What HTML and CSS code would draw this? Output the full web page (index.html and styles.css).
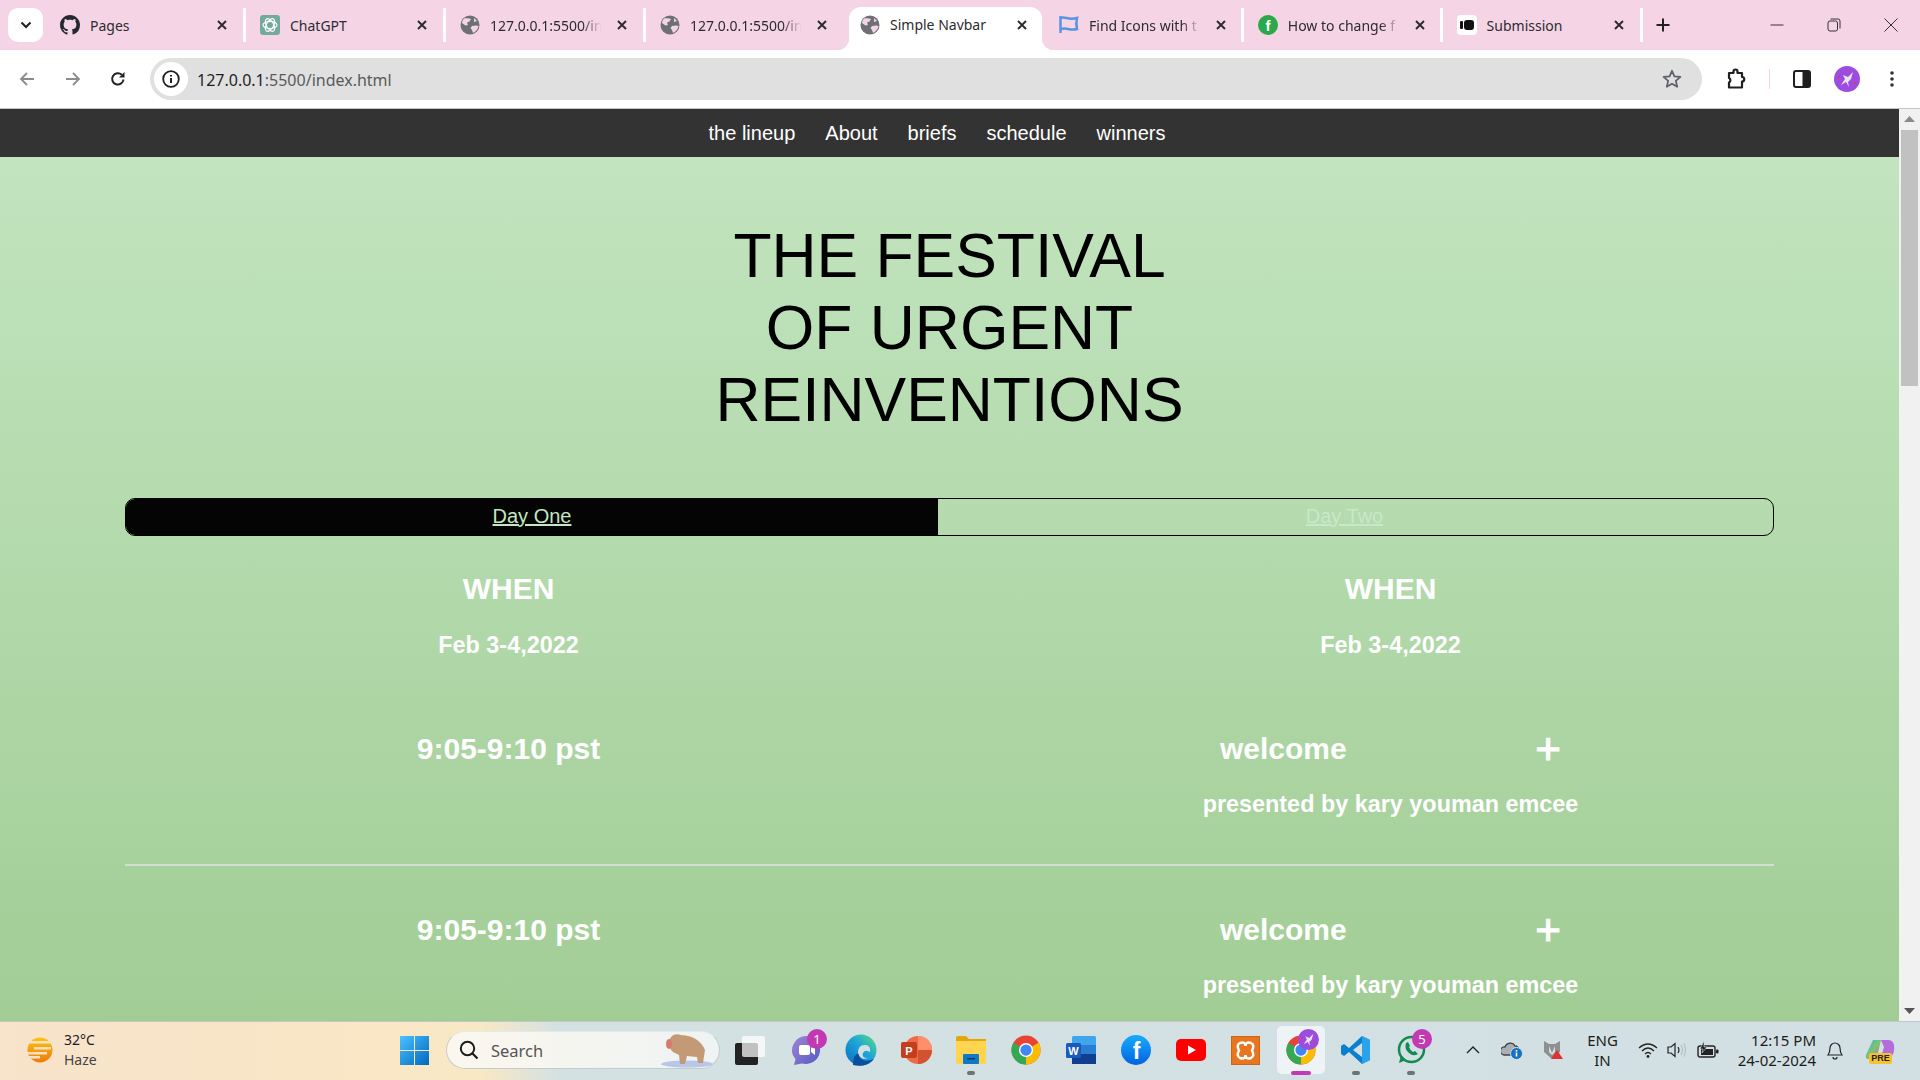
FILE: index.html
```html
<!DOCTYPE html>
<html lang="en">
<head>
<meta charset="utf-8">
<title>Simple Navbar</title>
<link rel="stylesheet" href="styles.css">
</head>
<body>
<svg class="defs" width="0" height="0" aria-hidden="true">
  <symbol id="globe" viewBox="0 0 20 20"><circle cx="10" cy="10" r="9.5" fill="#6d7075"/><path d="M4 3.500 C6 3 9 3 11 4 L9.500 6.500 L7 7.500 L8 10 L5.500 10.500 L2 8 C2 6.500 3 4.500 4 3.500Z M12 11 L16 10.500 L18.500 11 C18 14 16 16.500 13 18 L12 15 L10.500 13Z M14 3 L17 6 L14 7Z" fill="#f5d5e5"/></symbol>
  <symbol id="chrome" viewBox="0 0 32 32"><circle cx="16" cy="16" r="15.500" fill="#ea4335"/><path d="M16 16 L29.400 8.200 A15.500 15.500 0 0 1 16 31.500Z" fill="#fbbc05"/><path d="M16 16 L16 31.500 A15.500 15.500 0 0 1 2.600 8.200Z" fill="#34a853"/><circle cx="16" cy="16" r="7.500" fill="#fff"/><circle cx="16" cy="16" r="6" fill="#4285f4"/></symbol>
  <symbol id="close" viewBox="0 0 12 12"><path d="M2 2 L10 10 M10 2 L2 10" stroke="#2a2a30" stroke-width="1.900" fill="none"/></symbol>
  <symbol id="avatar" viewBox="0 0 26 26"><circle cx="13" cy="13" r="13" fill="#9c4de0"/><path d="M7 19 L11 13 L9 9 L14 11 L19 6 L17 13 L14 16 L15 21 L12 16Z" fill="#e8e4ea"/><circle cx="5" cy="11" r="1" fill="#e33"/><circle cx="21" cy="17" r="1" fill="#e33"/></symbol>
</svg>

<header class="tabstrip">
  <div class="tab-search"><svg width="12" height="8" viewBox="0 0 12 8"><path d="M1.500 1.500 L6 6 L10.500 1.500" stroke="#1f1f1f" stroke-width="2" fill="none"/></svg></div>
  <div class="tab">
    <svg class="fav" width="20" height="20" viewBox="0 0 16 16"><path fill="#24292f" d="M8 0C3.580 0 0 3.580 0 8c0 3.540 2.290 6.530 5.470 7.590.4.070.55-.17.55-.38 0-.19-.01-.82-.01-1.490-2.010.37-2.530-.49-2.690-.94-.09-.23-.48-.94-.82-1.130-.28-.15-.68-.52-.01-.53.630-.01 1.080.58 1.230.82.720 1.210 1.870.87 2.330.66.070-.52.280-.87.510-1.070-1.780-.2-3.640-.89-3.640-3.950 0-.87.310-1.590.82-2.150-.08-.2-.36-1.020.08-2.120 0 0 .67-.21 2.200.82.640-.18 1.320-.27 2-.27s1.360.09 2 .27c1.530-1.040 2.200-.82 2.200-.82.440 1.100.16 1.920.08 2.120.51.560.82 1.270.82 2.150 0 3.070-1.870 3.750-3.650 3.950.29.250.54.730.54 1.480 0 1.070-.01 1.930-.01 2.200 0 .21.150.46.550.38A8.010 8.010 0 0 0 16 8c0-4.420-3.580-8-8-8z"/></svg>
    <span class="tab-title">Pages</span><svg class="tab-x" width="12" height="12"><use href="#close"/></svg>
  </div>
  <div class="tab">
    <svg class="fav" width="20" height="20" viewBox="0 0 20 20"><rect width="20" height="20" rx="3" fill="#74aa9c"/><g fill="none" stroke="#fff" stroke-width="1.100"><ellipse cx="10" cy="10" rx="7" ry="3.600"/><ellipse cx="10" cy="10" rx="7" ry="3.600" transform="rotate(60 10 10)"/><ellipse cx="10" cy="10" rx="7" ry="3.600" transform="rotate(120 10 10)"/></g></svg>
    <span class="tab-title">ChatGPT</span><svg class="tab-x" width="12" height="12"><use href="#close"/></svg>
  </div>
  <div class="tab">
    <svg class="fav" width="20" height="20"><use href="#globe"/></svg>
    <span class="tab-title fade">127.0.0.1:5500/in</span><svg class="tab-x" width="12" height="12"><use href="#close"/></svg>
  </div>
  <div class="tab tab-before-active">
    <svg class="fav" width="20" height="20"><use href="#globe"/></svg>
    <span class="tab-title fade">127.0.0.1:5500/in</span><svg class="tab-x" width="12" height="12"><use href="#close"/></svg>
  </div>
  <div class="tab tab-active">
    <svg class="fav" width="20" height="20"><use href="#globe"/></svg>
    <span class="tab-title">Simple Navbar</span><svg class="tab-x" width="12" height="12"><use href="#close"/></svg>
  </div>
  <div class="tab tab-narrow">
    <svg class="fav" width="20" height="20" viewBox="0 0 20 20"><path d="M1.500 1 L1.500 18 M1.500 3 C6 1 9 5.500 18 3 C17 7 17 10 18 14 C10 16 7 11.500 1.500 14.500" fill="none" stroke="#5a93e0" stroke-width="2.500"/></svg>
    <span class="tab-title fade">Find Icons with t</span><svg class="tab-x" width="12" height="12"><use href="#close"/></svg>
  </div>
  <div class="tab tab-narrow">
    <svg class="fav" width="20" height="20" viewBox="0 0 20 20"><circle cx="10" cy="10" r="10" fill="#2aa84a"/><text x="10" y="15.500" class="fav-letter">f</text></svg>
    <span class="tab-title fade">How to change f</span><svg class="tab-x" width="12" height="12"><use href="#close"/></svg>
  </div>
  <div class="tab">
    <svg class="fav" width="20" height="20" viewBox="0 0 20 20"><rect width="20" height="20" rx="4" fill="#fff"/><rect x="3" y="6" width="3" height="8" rx="1" fill="#111"/><rect x="7" y="5" width="10" height="10" rx="3" fill="#111"/></svg>
    <span class="tab-title">Submission</span><svg class="tab-x" width="12" height="12"><use href="#close"/></svg>
  </div>
  <svg class="new-tab" width="14" height="14" viewBox="0 0 14 14"><path d="M7 0.500 V13.500 M0.500 7 H13.500" stroke="#222" stroke-width="2"/></svg>
  <div class="window-controls">
    <svg width="14" height="14" viewBox="0 0 14 14"><path d="M0.500 7 H13.500" stroke="#333" stroke-width="1"/></svg>
    <svg width="14" height="14" viewBox="0 0 14 14"><rect x="1" y="3" width="9.500" height="10" rx="2" fill="none" stroke="#333"/><path d="M3.500 1 H11 Q13 1 13 3 V10.500" fill="none" stroke="#333"/></svg>
    <svg width="14" height="14" viewBox="0 0 14 14"><path d="M0.500 0.500 L13.500 13.500 M13.500 0.500 L0.500 13.500" stroke="#333" stroke-width="1"/></svg>
  </div>
</header>

<div class="toolbar">
  <div class="nav-buttons">
    <svg width="16" height="16" viewBox="0 0 16 16"><path d="M15 8 H2 M8 2 L2 8 L8 14" stroke="#8c8c8c" stroke-width="1.800" fill="none"/></svg>
    <svg width="16" height="16" viewBox="0 0 16 16"><path d="M1 8 H14 M8 2 L14 8 L8 14" stroke="#8c8c8c" stroke-width="1.800" fill="none"/></svg>
    <svg width="16" height="16" viewBox="0 0 16 16"><path d="M13.500 8.500 A5.700 5.700 0 1 1 11.800 3.800" stroke="#222" stroke-width="2" fill="none"/><path d="M14.500 1 V6.500 H9Z" fill="#222"/></svg>
  </div>
  <div class="omnibox">
    <div class="site-info"><svg width="18" height="18" viewBox="0 0 18 18"><circle cx="9" cy="9" r="7.800" fill="none" stroke="#1f1f1f" stroke-width="1.800"/><path d="M9 8 V13 M9 5 V6.600" stroke="#1f1f1f" stroke-width="2"/></svg></div>
    <div class="url"><span class="url-host">127.0.0.1</span>:5500/index.html</div>
    <svg class="star" width="20" height="20" viewBox="0 0 20 20"><path d="M10 1.800 L12.400 7.400 L18.400 7.900 L13.800 11.900 L15.200 17.800 L10 14.700 L4.800 17.800 L6.200 11.900 L1.600 7.900 L7.600 7.400Z" fill="none" stroke="#5f6368" stroke-width="1.800" stroke-linejoin="round"/></svg>
  </div>
  <div class="actions">
    <div class="action action-wide"><svg width="20" height="22" viewBox="0 0 20 22"><path d="M3 5 H7.500 V3.500 A2 2 0 0 1 11.500 3.500 V5 H16 V9 A2 2 0 0 1 16 13.500 V19.500 H3 V14.500 A2.500 2.500 0 0 0 3 10Z" fill="none" stroke="#1f1f1f" stroke-width="2.200" stroke-linejoin="round"/></svg></div>
    <div class="action action-divider"><span class="divider"></span></div>
    <div class="action action-wide"><svg width="18" height="18" viewBox="0 0 18 18"><rect x="1" y="1" width="16" height="16" rx="2" fill="#fff" stroke="#1f1f1f" stroke-width="2"/><rect x="9.500" y="1" width="7.500" height="16" fill="#1f1f1f"/></svg></div>
    <div class="action action-wider"><svg width="26" height="26"><use href="#avatar"/></svg></div>
    <div class="action action-wider"><svg width="4" height="16" viewBox="0 0 4 16"><circle cx="2" cy="2" r="1.800" fill="#333"/><circle cx="2" cy="8" r="1.800" fill="#333"/><circle cx="2" cy="14" r="1.800" fill="#333"/></svg></div>
  </div>
</div>

<div class="viewport">
  <div class="page">
    <nav class="site-nav">
      <a>the lineup</a><a>About</a><a>briefs</a><a>schedule</a><a>winners</a>
    </nav>
    <main class="content">
      <h1 class="festival-title">THE FESTIVAL<br>OF URGENT<br>REINVENTIONS</h1>
      <div class="day-tabs">
        <a class="day-tab day-on">Day One</a>
        <a class="day-tab day-off">Day Two</a>
      </div>
      <div class="columns when-row">
        <div class="cell"><h2 class="when">WHEN</h2><p class="date">Feb 3-4,2022</p></div>
        <div class="cell"><h2 class="when">WHEN</h2><p class="date">Feb 3-4,2022</p></div>
      </div>
      <section class="columns session session-first">
        <div class="cell"><h3 class="slot">9:05-9:10 pst</h3></div>
        <div class="cell">
          <div class="session-head"><h3 class="slot">welcome</h3><span class="plus">+</span></div>
          <p class="presenter">presented by kary youman emcee</p>
        </div>
      </section>
      <section class="columns session">
        <div class="cell"><h3 class="slot">9:05-9:10 pst</h3></div>
        <div class="cell">
          <div class="session-head"><h3 class="slot">welcome</h3><span class="plus">+</span></div>
          <p class="presenter">presented by kary youman emcee</p>
        </div>
      </section>
    </main>
  </div>
  <div class="scrollbar">
    <svg width="11" height="6" viewBox="0 0 11 6"><path d="M5.500 0 L11 6 H0Z" fill="#8a8a8a"/></svg>
    <div class="scroll-track"><div class="scroll-thumb"></div></div>
    <svg width="11" height="6" viewBox="0 0 11 6"><path d="M0 0 H11 L5.500 6Z" fill="#555"/></svg>
  </div>
</div>

<footer class="taskbar">
  <div class="weather">
    <svg width="28" height="26" viewBox="0 0 28 26"><defs><linearGradient id="sun" x1="0" y1="0" x2="0" y2="1"><stop offset="0" stop-color="#fdc30f"/><stop offset="1" stop-color="#f0780f"/></linearGradient></defs><circle cx="15" cy="13" r="12.500" fill="url(#sun)"/><g fill="#f5e3c4"><rect x="4" y="4" width="24" height="2.500"/><rect x="9" y="10" width="17" height="2.500"/><rect x="2" y="15" width="20" height="2.500"/><rect x="0" y="19" width="15" height="2.500"/></g></svg>
    <div class="weather-text"><span class="temp">32°C</span><span class="haze">Haze</span></div>
  </div>
  <svg class="start" width="29" height="29" viewBox="0 0 29 29"><defs><linearGradient id="win" x1="0" y1="0" x2="1" y2="1"><stop offset="0" stop-color="#4cc2ff"/><stop offset="1" stop-color="#0067c0"/></linearGradient></defs><path fill="url(#win)" d="M0 0 H14 V14 H0Z M15 0 H29 V14 H15Z M0 15 H14 V29 H0Z M15 15 H29 V29 H15Z"/></svg>
  <div class="search">
    <svg width="20" height="20" viewBox="0 0 20 20"><circle cx="8.500" cy="8.500" r="6.700" fill="none" stroke="#1c1c1c" stroke-width="2"/><path d="M13.500 13.500 L18.500 18.500" stroke="#1c1c1c" stroke-width="2.200"/></svg>
    <span class="search-label">Search</span>
    <svg class="monkey" width="56" height="36" viewBox="0 0 56 36"><ellipse cx="30" cy="32" rx="26" ry="3.500" fill="#b8c6e8"/><path d="M12 10 Q14 0 24 3 Q42 4 48 18 L46 31 L41 31 L40 25 L30 24 L28 32 L23 32 L22 23 L16 20 Q12 17 12 10Z" fill="#c49a76"/><ellipse cx="12" cy="12" rx="3" ry="5" fill="#d77a6a"/></svg>
  </div>
  <div class="task-view"><svg width="30" height="29" viewBox="0 0 30 29"><rect x="0" y="7" width="23" height="22" rx="2" fill="#222"/><rect x="7" y="0" width="23" height="21" rx="2" fill="#fff" fill-opacity="0.720"/></svg></div>

  <div class="task">
    <svg width="32" height="32" viewBox="0 0 32 32"><defs><linearGradient id="teams" x1="0" y1="0" x2="1" y2="1"><stop offset="0" stop-color="#a186d6"/><stop offset="1" stop-color="#5359c4"/></linearGradient></defs><path d="M17 2 A14.500 14 0 1 1 12 29.500 L4 31 L5.500 25 A14.500 14 0 0 1 17 2Z" fill="url(#teams)"/><rect x="9" y="11" width="11" height="10" rx="2" fill="#fff"/><path d="M21 14 L25 11 V21 L21 18Z" fill="#fff"/></svg>
    <span class="badge">1</span>
  </div>
  <div class="task">
    <svg width="32" height="32" viewBox="0 0 32 32"><defs><linearGradient id="edge" x1="0" y1="1" x2="1" y2="0"><stop offset="0" stop-color="#0a6cc0"/><stop offset="0.550" stop-color="#1ea5d8"/><stop offset="1" stop-color="#5fe07a"/></linearGradient></defs><circle cx="16" cy="16" r="15.500" fill="url(#edge)"/><path d="M8 31 Q12 32 18 31.500 Q25 30 29 25 Q22 28 18 26 Q13 24 14 19 Q8 20 8 31Z" fill="#0b4f9c"/><path d="M13 19 Q13 10 21 11 Q26 12 25 18 Q20 15 18 19 Q16 24 23 24 Q16 27 13 19Z" fill="#d3e0e3"/></svg>
  </div>
  <div class="task">
    <svg width="32" height="32" viewBox="0 0 32 32"><circle cx="18" cy="16" r="14" fill="#ed6c47"/><path d="M18 2 A14 14 0 0 1 32 16 H18Z" fill="#ff8f6b"/><path d="M18 16 H32 A14 14 0 0 1 18 30Z" fill="#d35230"/><rect x="1" y="8" width="16" height="16" rx="2" fill="#c43e1c"/><text x="9" y="21" class="office-letter">P</text></svg>
  </div>
  <div class="task task-open">
    <svg width="32" height="32" viewBox="0 0 32 32"><path d="M1 4 Q1 2 3 2 H11 L14 5 H31 V30 H1Z" fill="#e2a60e"/><rect x="1" y="7" width="30" height="23" fill="#ffd54f"/><rect x="8" y="20" width="16" height="10" rx="1" fill="#0f78c9"/><rect x="12" y="24" width="8" height="1.500" fill="#063a66"/></svg>
    <span class="dot"></span>
  </div>
  <div class="task"><svg width="30" height="30"><use href="#chrome"/></svg></div>
  <div class="task">
    <svg width="30" height="30" viewBox="0 0 30 30"><rect x="6" y="1" width="24" height="28" rx="1.500" fill="#41a5ee"/><rect x="6" y="10" width="24" height="9" fill="#2b7cd3"/><rect x="6" y="19" width="24" height="10" fill="#103f91"/><rect x="0" y="8" width="15" height="15" rx="1.500" fill="#185abd"/><text x="7.500" y="19.500" class="office-letter">W</text></svg>
  </div>
  <div class="task">
    <svg width="30" height="30" viewBox="0 0 30 30"><defs><linearGradient id="fb" x1="0" y1="0" x2="0" y2="1"><stop offset="0" stop-color="#18acfe"/><stop offset="1" stop-color="#0163e0"/></linearGradient></defs><circle cx="15" cy="15" r="15" fill="url(#fb)"/><text x="15.500" y="24" class="fb-letter">f</text></svg>
  </div>
  <div class="task">
    <svg width="30" height="22" viewBox="0 0 30 22"><rect width="30" height="22" rx="5" fill="#f00"/><path d="M12 6.500 L20 11 L12 15.500Z" fill="#fff"/></svg>
  </div>
  <div class="task">
    <svg width="29" height="29" viewBox="0 0 29 29"><rect width="29" height="29" rx="2" fill="#e9761e" stroke="#a7561a"/><path d="M9 7 Q14 5 14.500 10 Q15 5 20 7 Q24 9 21 14.500 Q24 20 20 22 Q15 24 14.500 19 Q14 24 9 22 Q5 20 8 14.500 Q5 9 9 7Z" fill="none" stroke="#fff" stroke-width="2.500"/></svg>
  </div>
  <div class="task task-active">
    <svg width="30" height="30"><use href="#chrome"/></svg>
    <svg class="profile-mark" width="21" height="21"><use href="#avatar"/></svg>
    <span class="dot dot-active"></span>
  </div>
  <div class="task task-open">
    <svg width="30" height="30" viewBox="0 0 30 30"><path d="M21 1 L29 5 V25 L21 29 L8 17 L3 21 L0 19 V11 L3 9 L8 13Z" fill="#0a7fce"/><path d="M21 1 L29 5 V25 L21 29Z" fill="#2aa3ea"/><path d="M21 8 L12 15 L21 22Z" fill="#d3e0e3"/></svg>
    <span class="dot"></span>
  </div>
  <div class="task task-open">
    <svg width="30" height="30" viewBox="0 0 30 30"><circle cx="15.500" cy="14.500" r="12.500" fill="none" stroke="#128a51" stroke-width="2.500"/><path d="M3 28 L5 20 L10 25Z" fill="#128a51"/><path d="M10 8 Q8 14 13 18 Q17 22 22 19 L19 16 L17 17 Q14 15 13 12 L14 11 L12 7Z" fill="#128a51"/></svg>
    <span class="badge">5</span>
    <span class="dot"></span>
  </div>

  <div class="tray tray-chevron"><svg width="14" height="8" viewBox="0 0 14 8"><path d="M1 7 L7 1 L13 7" stroke="#222" stroke-width="1.400" fill="none"/></svg></div>
  <div class="tray tray-cloud"><svg width="22" height="20" viewBox="0 0 22 20"><path d="M3 15 A4 4 0 0 1 4 7 A5.500 5.500 0 0 1 14 6 A4 4 0 0 1 18 10 L15 15Z" fill="#a9afb3" stroke="#3f4349" stroke-width="1.300"/><circle cx="15.500" cy="13.500" r="6" fill="#1472c4" stroke="#d3e0e3"/><rect x="14.700" y="12.500" width="1.600" height="4" fill="#fff"/><rect x="14.700" y="10" width="1.600" height="1.600" fill="#fff"/></svg></div>
  <div class="tray tray-shield"><svg width="20" height="20" viewBox="0 0 20 20"><path d="M1 1 L6 4 H12 L17 1 V12 L9 19 L1 12Z" fill="#8d8f90"/><path d="M6 6 L9 13 L12 6 V12 L9 15 L6 12Z" fill="#d3e0e3"/><path d="M14 10 L20 19 H8Z" fill="#e2312d"/></svg></div>
  <div class="tray tray-lang"><span>ENG</span><span>IN</span></div>
  <div class="tray tray-wifi"><svg width="20" height="16" viewBox="0 0 20 16"><path d="M1 6 Q10 -2 19 6 M4 9 Q10 3 16 9 M7 12 Q10 9 13 12" fill="none" stroke="#222" stroke-width="1.300"/><circle cx="10" cy="14.500" r="1.400" fill="#222"/></svg></div>
  <div class="tray tray-sound"><svg width="20" height="16" viewBox="0 0 20 16"><path d="M1 5 H4 L8 1.500 V14.500 L4 11 H1Z" fill="none" stroke="#222" stroke-width="1.200"/><path d="M11 5 Q13 8 11 11" fill="none" stroke="#222" stroke-width="1.100"/><path d="M14 3 Q17 8 14 13 M17 1.500 Q20 8 17 14.500" fill="none" stroke="#b5bcbf" stroke-width="1.100"/></svg></div>
  <div class="tray tray-battery"><svg width="22" height="18" viewBox="0 0 22 18"><rect x="1" y="5" width="17" height="11" rx="2" fill="#d3e0e3" stroke="#222" stroke-width="1.400"/><rect x="4" y="8" width="12" height="6" fill="#222"/><rect x="19" y="8.500" width="2.500" height="4" rx="1" fill="#222"/><path d="M7 0 L3 8 H6 L5 12 L10 6 H7Z" fill="#222" stroke="#d3e0e3" stroke-width="0.600"/></svg></div>
  <div class="clock"><span>12:15 PM</span><span>24-02-2024</span></div>
  <div class="tray tray-bell"><svg width="18" height="20" viewBox="0 0 18 20"><path d="M2 15 Q4 12 4 8 A5 5 0 0 1 14 8 Q14 12 16 15Z M7 17 A2 2 0 0 0 11 17" fill="none" stroke="#222" stroke-width="1.200"/></svg></div>
  <div class="tray tray-copilot">
    <svg width="30" height="22" viewBox="0 0 30 22"><defs><linearGradient id="cop" x1="0" y1="0" x2="1" y2="1"><stop offset="0" stop-color="#2fb5e8"/><stop offset="0.500" stop-color="#7fc36b"/><stop offset="1" stop-color="#c85fd6"/></linearGradient></defs><path d="M8 1 H16 L13 14 Q12 20 7 20 H3 Q0 20 1 16Z" fill="url(#cop)"/><path d="M16 1 H23 Q28 1 29 6 Q30 14 26 18 H16 L19 8Z" fill="#b66bdc"/></svg>
    <span class="pre">PRE</span>
  </div>
</footer>
</body>
</html>
```
FILE: styles.css
```css
* { box-sizing: border-box; }
html, body { margin: 0; height: 100%; }
body {
  width: 1920px;
  height: 1080px;
  overflow: hidden;
  display: flex;
  flex-direction: column;
  font-family: "Liberation Sans", Arial, sans-serif;
  background: #fff;
}
.defs { position: absolute; }

/* browser tab strip */
.tabstrip {
  height: 50px;
  flex: none;
  display: flex;
  align-items: center;
  padding-left: 8px;
  background: #f5d5e5;
  font-family: "Noto Sans", sans-serif;
}
.tab-search {
  width: 35px;
  height: 34px;
  flex: none;
  margin-right: 3px;
  display: flex;
  align-items: center;
  justify-content: center;
  background: #fff;
  border-radius: 10px;
}
.tab {
  position: relative;
  width: 200px;
  height: 34px;
  flex: none;
  display: flex;
  align-items: center;
  padding-left: 14px;
  border-right: 3px solid #fff;
}
.tab-before-active { border-right-color: transparent; }
.tab-narrow { width: 198.8px; }
.tab-active {
  background: #fff;
  height: 43px;
  margin-top: 7px;
  border-radius: 12px 12px 0 0;
  padding-bottom: 8px;
  width: 193px;
  margin-left: 3px;
  margin-right: 3px;
  padding-left: 11px;
  border-right: 0;
}
.tab-active::before, .tab-active::after {
  content: "";
  position: absolute;
  bottom: 0;
  width: 12px;
  height: 12px;
}
.tab-active::before { left: -12px; background: radial-gradient(circle at 0 0, transparent 12px, #fff 12.5px); }
.tab-active::after { right: -12px; background: radial-gradient(circle at 100% 0, transparent 12px, #fff 12.5px); }
.fav { flex: none; }
.fav-letter { font: bold 15px "Liberation Sans", sans-serif; fill: #fff; text-anchor: middle; }
.tab-title {
  width: 116px;
  margin-left: 10px;
  font-size: 14px;
  color: #2c2c30;
  white-space: nowrap;
}
.fade {
  -webkit-mask-image: linear-gradient(90deg, #000 80%, transparent 96%);
  mask-image: linear-gradient(90deg, #000 80%, transparent 96%);
}
.tab-x { flex: none; margin-left: 10px; }
.new-tab { flex: none; margin-left: 13px; }
.window-controls {
  margin-left: auto;
  width: 150px;
  display: flex;
  justify-content: space-between;
  padding: 0 22px 0 0;
}

/* browser toolbar */
.toolbar {
  height: 58px;
  flex: none;
  display: flex;
  align-items: center;
  background: #fff;
  border-radius: 10px 10px 0 0;
  position: relative;
}
.nav-buttons {
  width: 150px;
  flex: none;
  padding: 0 24px 0 19px;
  display: flex;
  justify-content: space-between;
}
.omnibox {
  width: 1552px;
  height: 42px;
  flex: none;
  display: flex;
  align-items: center;
  background: #e0e0e0;
  border-radius: 21px;
  padding: 0 20px 0 4px;
}
.site-info {
  width: 34px;
  height: 34px;
  border-radius: 50%;
  background: #fff;
  display: flex;
  align-items: center;
  justify-content: center;
  flex: none;
}
.url {
  margin-left: 9px;
  padding-top: 1px;
  font-family: "Noto Sans", sans-serif;
  font-size: 16px;
  color: #5a5a5a;
  flex: 1;
}
.url-host { color: #1f1f1f; }
.actions { flex: 1; display: flex; align-items: center; padding-left: 12px; }
.action { height: 40px; display: flex; align-items: center; justify-content: center; flex: none; }
.action-wide { width: 44px; }
.action-divider { width: 22px; }
.action-wider { width: 45px; }
.divider { width: 1px; height: 20px; background: #f5d5e5; }

/* page area */
.viewport {
  flex: 1;
  min-height: 0;
  display: flex;
  border-top: 1px solid #c4c4c4;
}
.page {
  flex: 1;
  min-width: 0;
  overflow: hidden;
  background: linear-gradient(180deg, #c2e4bf 48px, #a1cd95 100%);
}
.scrollbar {
  width: 21px;
  flex: none;
  display: flex;
  flex-direction: column;
  align-items: center;
  background: #f1f1f1;
  padding: 7px 0;
}
.scroll-track { flex: 1; width: 100%; padding: 8px 2px 0; }
.scroll-thumb { height: 256px; background: #c1c1c1; }

.site-nav {
  height: 48px;
  display: flex;
  justify-content: center;
  align-items: center;
  gap: 30px;
  padding-right: 25px;
  background: #333;
}
.site-nav a { color: #fff; font-size: 20px; }

.content { padding: 0 125px; }
.festival-title {
  margin: 63px 0 62px;
  font-size: 62.4px;
  font-weight: 400;
  line-height: 72px;
  text-align: center;
  color: #000;
}
.day-tabs {
  height: 38px;
  display: grid;
  grid-template-columns: 812px 1fr;
  border: 1.5px solid #000;
  border-radius: 10px;
  overflow: hidden;
}
.day-tab {
  display: flex;
  align-items: center;
  justify-content: center;
  padding-bottom: 1px;
  font-size: 20px;
  text-decoration: underline;
}
.day-on { background: #040404; color: #c3e6c3; }
.day-off { color: #c9e8ca; padding-right: 22px; }

.columns {
  display: grid;
  grid-template-columns: 1fr 1fr;
  column-gap: 115px;
}
.cell { text-align: center; color: #fff; }
.when-row { margin-top: 36px; }
.when { margin: 0; font-size: 30px; line-height: 34px; font-weight: 700; }
.date { margin: 22px 0 0; font-size: 23.4px; line-height: 34px; font-weight: 700; }
.session { height: 181px; padding-top: 45px; }
.session-first { margin-top: 22px; position: relative; }
.session-first::after {
  content: "";
  position: absolute;
  left: 0;
  right: 0;
  bottom: -1px;
  height: 2px;
  background: #d3dfd2;
}
.slot { margin: 0; font-size: 30px; line-height: 40px; font-weight: 700; color: #fff; }
.session-head {
  width: 341px;
  margin: 0 auto;
  display: flex;
  justify-content: space-between;
  align-items: center;
  height: 40px;
}
.plus { font-size: 44px; line-height: 40px; font-weight: 400; -webkit-text-stroke: 1px #fff; }
.presenter { margin: 18px 0 0; font-size: 23.4px; line-height: 34px; font-weight: 700; }

/* windows taskbar */
.taskbar {
  height: 59px;
  flex: none;
  display: flex;
  align-items: center;
  padding-bottom: 2px;
  background: linear-gradient(90deg, #f8e3cb 0, #f9e8c4 480px, #d3e1e3 560px, #d3e0e3 100%);
  border-top: 1px solid #bfc9c6;
  font-family: "Noto Sans", sans-serif;
  color: #1c1c1c;
}
.weather { width: 400px; flex: none; display: flex; align-items: center; padding-left: 25px; }
.weather-text { display: flex; flex-direction: column; margin-left: 11px; font-size: 14px; line-height: 20px; }
.haze { color: #444; }
.start { flex: none; }
.search {
  width: 274px;
  height: 38px;
  margin-left: 17px;
  flex: none;
  display: flex;
  align-items: center;
  padding-left: 12px;
  position: relative;
  border-radius: 19px;
  background: linear-gradient(90deg, #fbf7ee, #eef3f3);
  border: 1px solid #c3cccc;
  border-top-color: #e4e9e9;
}
.search-label { margin-left: 12px; font-size: 16.5px; color: #555; }
.monkey { position: absolute; right: 6px; top: 0; }
.task-view { width: 58px; flex: none; display: flex; justify-content: center; padding-left: 1px; }
.task {
  position: relative;
  width: 55px;
  height: 48px;
  flex: none;
  display: flex;
  align-items: center;
  justify-content: center;
}
.task-active::before {
  content: "";
  position: absolute;
  left: 3.5px;
  right: 3.5px;
  top: 0;
  bottom: 0;
  background: #eef3f5;
  border-radius: 5px;
}
.task-active svg { position: relative; }
.task-active .profile-mark { position: absolute; left: 25px; top: 3px; }
.badge {
  position: absolute;
  left: 29px;
  top: 3px;
  width: 20px;
  height: 20px;
  border-radius: 50%;
  background: #c239b3;
  color: #fff;
  font-size: 13px;
  line-height: 20px;
  text-align: center;
}
.dot {
  position: absolute;
  left: 50%;
  bottom: -1px;
  width: 8px;
  height: 4px;
  margin-left: -4px;
  border-radius: 2px;
  background: #6d7275;
}
.dot-active { width: 20px; margin-left: -10px; background: #c239b3; }
.office-letter { font: bold 11px "Liberation Sans", sans-serif; fill: #fff; text-anchor: middle; }
.fb-letter { font: bold 23px "Liberation Sans", sans-serif; fill: #fff; text-anchor: middle; }

.tray { position: relative; flex: none; display: flex; align-items: center; justify-content: center; }
.tray-chevron { width: 36px; margin-left: 17px; }
.tray-cloud { width: 42px; }
.tray-shield { width: 40px; }
.tray-lang { width: 59px; flex-direction: column; font-size: 15px; line-height: 20.5px; }
.tray-wifi { width: 32px; }
.tray-sound { width: 26px; }
.tray-battery { width: 36px; }
.clock {
  width: 90px;
  flex: none;
  display: flex;
  flex-direction: column;
  align-items: flex-end;
  font-size: 15px;
  line-height: 20.5px;
  white-space: nowrap;
}
.tray-bell { width: 38px; }
.tray-copilot { width: 52px; }
.pre {
  position: absolute;
  left: 15px;
  top: 14px;
  width: 23px;
  height: 11px;
  border-radius: 2px;
  background: #f7c22e;
  color: #222;
  font: bold 9px/11px "Liberation Sans", sans-serif;
  text-align: center;
}
```
